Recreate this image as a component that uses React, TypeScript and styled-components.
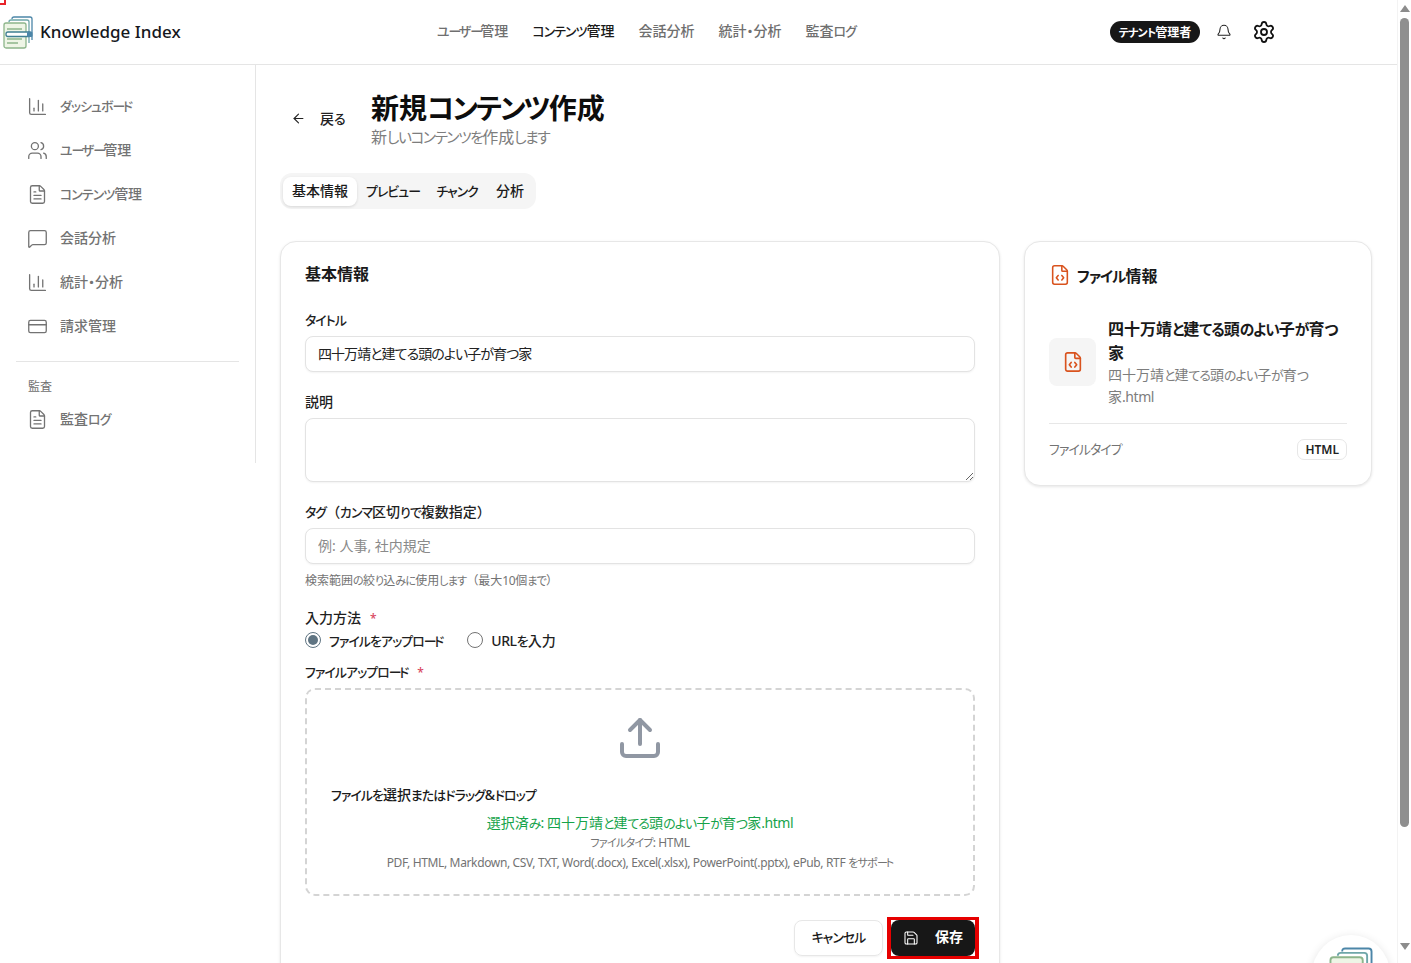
import React from "react";
import styled, { createGlobalStyle } from "styled-components";
import { ArrowLeft, Bell, ChartColumn, CreditCard, FileCode, FileText, MessageSquare, Save, Settings, Upload, Users } from "lucide-react";

const Global = createGlobalStyle`
  html, body { margin: 0; padding: 0; height: 100%; overflow: hidden; background: #fff; }
  body { font-family: "Noto Sans", "Noto Sans CJK JP", sans-serif; color: #111; font-feature-settings: "palt" 1; }
  * { box-sizing: border-box; }
`;

/* The reference's Japanese face has smaller, tighter kana than Noto: runs are adjusted by kind. */
const Kana = styled.span`font-size: var(--kana-size, 0.92em); letter-spacing: var(--kana, -0.07em);`;
const Long = styled.span`font-size: var(--kana-size, 0.92em); letter-spacing: var(--long, -0.2em);`;
const Latin = styled.span`letter-spacing: -0.03em;`;
const Wide = styled.span`font-feature-settings: normal; letter-spacing: -0.02em;`;
const Jp = ({ children }: { children: string }) => (
  <>
    {children.split(/([ぁ-んァ-ヶ]+|ー+|[（）]|[A-Za-z0-9.,:()& ]+)/).filter(Boolean).map((run, i) => {
      if (/^ー/.test(run)) return <Long key={i}>{run}</Long>;
      if (/^[ぁ-んァ-ヶ]/.test(run)) return <Kana key={i}>{run}</Kana>;
      if (/^[（）]/.test(run)) return <Wide key={i}>{run}</Wide>;
      if (/^[A-Za-z0-9.,:()& ]/.test(run)) return <Latin key={i}>{run}</Latin>;
      return <span key={i}>{run}</span>;
    })}
  </>
);

const Shell = styled.div`position: relative; display: flex; width: 1411px; height: 963px; overflow: hidden; background: #fff;`;
const Page = styled.div`flex: 0 0 1397px; width: 1397px; display: flex; flex-direction: column; height: 963px; overflow: hidden;`;
const ScrollTrack = styled.div`flex: 0 0 14px; background: #fff; border-left: 1px solid #f3f3f3; display: flex; flex-direction: column; align-items: center; padding-top: 5px;`;
const ScrollUp = styled.div`width: 0; height: 0; border-left: 5px solid transparent; border-right: 5px solid transparent; border-bottom: 7px solid #8c8c8c;`;
const ScrollDown = styled.div`width: 0; height: 0; border-left: 5px solid transparent; border-right: 5px solid transparent; border-top: 7px solid #8c8c8c; margin-top: 116px;`;
const ScrollThumb = styled.div`width: 9px; height: 809px; margin-top: 6px; border-radius: 5px; background: #8f8f8f;`;
const Marker = styled.div`position: absolute; left: 0; top: 0; width: 6px; height: 5px; border-right: 2px solid #e8232a; border-bottom: 2px solid #e8232a;`;

const Header = styled.header`flex: 0 0 65px; height: 65px; border-bottom: 1px solid #e5e5e5; display: grid; grid-template-columns: 437px 673px 1fr; align-items: center; padding-left: 3px;`;
const Brand = styled.div`display: flex; align-items: center; gap: 7px;`;
const BrandName = styled.span`font-size: 17px; font-weight: 500; color: #16181d; margin-top: -1px;`;
const TopNav = styled.nav`display: flex; gap: 24px; margin: -2px 0 0 -3px;`;
const TopLink = styled.span<{ $active?: boolean }>`font-size: 14px; font-weight: 500; line-height: 20px; color: ${p => (p.$active ? "#1a1a1a" : "#6f6f6f")};`;
const HeadRight = styled.div`display: flex; align-items: center; margin-left: -3px;`;
const Badge = styled.span`display: inline-flex; align-items: center; justify-content: center; width: 90px; height: 22px; border-radius: 11px; background: #171717; color: #fff; font-size: 12px; font-weight: 600;`;
const BellWrap = styled.span`display: flex; margin-left: 16px; color: #222;`;
const GearWrap = styled.span`display: flex; margin-left: 20px; color: #111;`;

const Body = styled.div`display: flex; flex: 1; min-height: 0; align-items: flex-start;`;
const Sidebar = styled.aside`flex: 0 0 256px; width: 256px; height: 398px; border-right: 1px solid #e5e5e5; padding: 19px 16px 0;`;
const SideItem = styled.div`display: flex; align-items: center; height: 44px; padding-left: 11px; gap: 12px; color: #737373;`;
const SideText = styled.span`font-size: 14px; font-weight: 500; color: #737373; margin-top: -2px;`;
const SideDivider = styled.div`height: 1px; background: #e5e5e5; margin: 13px 0 16px;`;
const SideLabel = styled.div`font-size: 12px; line-height: 18px; padding-left: 12px; color: #6f6f6f;`;
const SideLast = styled(SideItem)`height: 34px; margin-top: 6px;`;

const Main = styled.main`flex: 1; padding: 23px 25px 0 24px; min-width: 0;`;
const TitleRow = styled.div`display: flex; align-items: center; height: 60px;`;
const BackBtn = styled.div`display: flex; align-items: center; gap: 15px; padding-left: 11px; width: 91px; font-size: 14px; font-weight: 500; color: #222;`;
const BackLabel = styled.span`margin-left: -1px;`;
const TitleBlock = styled.div`display: flex; flex-direction: column;`;
const Title = styled.h1`--kana-size: 1em; --kana: -0.07em; --long: -0.07em; margin: 0; font-size: 28px; line-height: 36px; font-weight: 700; color: #0d0d0d;`;
const Subtitle = styled.p`--kana: -0.1em; margin: 1px 0 0; font-size: 16px; line-height: 20px; color: #7d7d7d;`;

const Tabs = styled.div`display: inline-flex; align-items: center; height: 36px; margin: 25px 0 32px; padding: 0 3px; border-radius: 12px; background: #f5f5f5;`;
const Tab = styled.div<{ $active?: boolean }>`
  height: 29px; display: flex; align-items: center; padding: 0 9px 2px; font-size: 14px; font-weight: 500; border-radius: 8px; color: #1a1a1a;
  ${p => (p.$active ? "background:#fff; box-shadow:0 1px 3px rgba(0,0,0,.12);" : "")}
`;
const Columns = styled.div`display: flex; align-items: flex-start; gap: 24px;`;
const Card = styled.section`background: #fff; border: 1px solid #e7e7e7; border-radius: 16px; box-shadow: 0 1px 3px rgba(0,0,0,.1);`;
const FormCard = styled(Card)`flex: 0 0 720px; padding: 21px 24px 0; height: 800px;`;
const InfoCard = styled(Card)`flex: 0 0 348px; height: 245px; padding: 21px 24px 0;`;
const CardTitle = styled.h2`margin: 0 0 25px; font-size: 16px; line-height: 22px; font-weight: 600; color: #1a1a1a;`;
const Label = styled.label`display: block; font-size: 14px; font-weight: 500; line-height: 20px; color: #1f1f1f;`;
const Required = styled.span`color: #d9475f; margin-left: 9px; font-size: 12px;`;
const Field = styled.input`
  display: block; width: 100%; height: 36px; margin-top: 6px; padding: 0 12px 2px; border: 1px solid #e3e3e3; border-radius: 8px;
  font: 400 14px "Noto Sans", "Noto Sans CJK JP", sans-serif; font-feature-settings: "palt" 1; letter-spacing: -0.95px; color: #222;
  background: #fff; box-shadow: 0 1px 2px rgba(0,0,0,.05); outline: none;
  &::placeholder { color: #8a8a8a; font-feature-settings: normal; letter-spacing: 0; }
`;
const Area = styled.textarea`display: block; width: 100%; height: 64px; margin-top: 6px; border: 1px solid #e3e3e3; border-radius: 8px; background: #fff; box-shadow: 0 1px 2px rgba(0,0,0,.05); outline: none;`;
const Spaced = styled.div<{ $top: number }>`margin-top: ${p => p.$top}px;`;
const Hint = styled.p`margin: 8px 0 0; font-size: 12px; line-height: 17px; color: #737373;`;
const RadioRow = styled.div`display: flex; align-items: center; height: 20px; margin-top: 1px;`;
const RadioDot = styled.span<{ $on?: boolean }>`width: 16px; height: 16px; border-radius: 50%; border: 1px solid ${p => (p.$on ? "#5f7482" : "#737373")}; display: flex; align-items: center; justify-content: center; &::after { content: ""; width: 10px; height: 10px; border-radius: 50%; background: ${p => (p.$on ? "#5f7482" : "transparent")}; }`;
const RadioText = styled.span`margin: 0 24px 0 8px; font-size: 14px; font-weight: 500; color: #1f1f1f;`;
const Drop = styled.div`height: 208px; margin-top: 5px; border: 2px dashed #d4d4d4; border-radius: 10px; display: flex; flex-direction: column; align-items: center; padding-top: 24px;`;
const UploadIcon = styled.div`height: 54px; color: #9097a3; display: flex;`;
const DropMain = styled.div`align-self: flex-start; margin: 17px 0 0 24px; font-size: 14px; font-weight: 500; line-height: 20px; color: #1a1a1a;`;
const Selected = styled.div`margin-top: 8px; font-size: 14px; line-height: 20px; color: #16a34a;`;
const Small = styled.div`font-size: 12px; line-height: 20px; color: #737373;`;
const Actions = styled.div`display: flex; justify-content: flex-end; align-items: center; gap: 8px; margin-top: 24px;`;
const CancelBtn = styled.div`width: 89px; height: 36px; padding-bottom: 4px; display: flex; align-items: center; justify-content: center; border: 1px solid #e7e7e7; border-radius: 8px; font-size: 14px; font-weight: 500; box-shadow: 0 1px 2px rgba(0,0,0,.05); color: #1a1a1a;`;
const SaveFrame = styled.div`margin: -3px -4px; border-style: solid; border-color: #e60000; border-width: 3px 4px; display: flex;`;
const SaveBtn = styled.div`width: 84px; height: 36px; padding: 0 0 0 12px; display: flex; align-items: center; gap: 16px; background: #171717; color: #fff; border-radius: 8px; font-size: 14px; font-weight: 600;`;
const SaveLabel = styled.span`margin-top: -4px;`;

const InfoHead = styled.div`display: flex; align-items: center; gap: 6px; height: 24px; font-size: 16px; font-weight: 600; color: #1a1a1a;`;
const FileRow = styled.div`display: flex; align-items: center; gap: 12px; margin-top: 30px;`;
const FileBox = styled.div`flex: 0 0 47px; height: 48px; border-radius: 8px; background: #f5f5f5; color: #d9531e; display: flex; align-items: center; justify-content: center;`;
const FileText2 = styled.div`min-width: 0;`;
const FileName = styled.div`font-size: 16px; line-height: 24px; font-weight: 600; color: #1a1a1a;`;
const FileSub = styled.div`margin-top: -1px; font-size: 14px; line-height: 21px; color: #7d7d7d;`;
const Rule = styled.div`height: 1px; background: #e7e7e7; margin-top: 16px;`;
const TypeRow = styled.div`display: flex; align-items: center; justify-content: space-between; margin-top: 14px; height: 22px;`;
const TypeLabel = styled.span`font-size: 14px; color: #737373; margin-top: -2px;`;
const TypeBadge = styled.span`height: 21px; padding: 0 7px; display: flex; align-items: center; border: 1px solid #e7e7e7; border-radius: 7px; font-size: 12px; font-weight: 600; color: #222;`;

const Floater = styled.div`position: absolute; left: 1312px; top: 935px; width: 78px; height: 78px; border-radius: 50%; background: #fff; box-shadow: 0 2px 10px rgba(0,0,0,.12); display: flex; justify-content: center; padding-top: 12px;`;

const Logo = ({ size = 30 }: { size?: number }) => (
  <svg width={size} height={size * 1.1} viewBox="0 0 30 33" fill="none" strokeWidth="1.3">
    <path d="M9 3 Q9 1 11 1 H27 Q29 1 29 3 V24" stroke="#4c86a8" />
    <path d="M6 6 Q6 4 8 4 H24 Q26 4 26 6 V27" stroke="#6fa6a8" />
    <rect x="1" y="7" width="22" height="25" rx="2" fill="#eef5e6" stroke="#8db58b" />
    <path d="M4 13 H19 M4 23 H19 M4 27 H15" stroke="#8db58b" />
    <rect x="3" y="16" width="25" height="4.5" rx="2" fill="#fff" stroke="#3f7f93" />
    <rect x="24" y="15.5" width="5.5" height="5.5" rx="1.5" fill="#4c86a8" />
  </svg>
);

const SideIcon = { size: 21, strokeWidth: 1.5 };
const menu = [
  { t: "ダッシュボード", I: ChartColumn },
  { t: "ユーザー管理", I: Users },
  { t: "コンテンツ管理", I: FileText },
  { t: "会話分析", I: MessageSquare },
  { t: "統計・分析", I: ChartColumn },
  { t: "請求管理", I: CreditCard },
];
const top = ["ユーザー管理", "コンテンツ管理", "会話分析", "統計・分析", "監査ログ"];

export default function App() {
  return (
    <Shell>
      <Global />
      <Marker />
      <Page>
        <Header>
          <Brand><Logo /><BrandName>Knowledge Index</BrandName></Brand>
          <TopNav>{top.map((t, i) => <TopLink key={t} $active={i === 1}><Jp>{t}</Jp></TopLink>)}</TopNav>
          <HeadRight>
            <Badge><Jp>テナント管理者</Jp></Badge>
            <BellWrap><Bell size={16} strokeWidth={1.6} /></BellWrap>
            <GearWrap><Settings size={24} strokeWidth={1.8} /></GearWrap>
          </HeadRight>
        </Header>
        <Body>
          <Sidebar>
            {menu.map(({ t, I }) => <SideItem key={t}><I {...SideIcon} /><SideText><Jp>{t}</Jp></SideText></SideItem>)}
            <SideDivider />
            <SideLabel>監査</SideLabel>
            <SideLast><FileText {...SideIcon} /><SideText><Jp>監査ログ</Jp></SideText></SideLast>
          </Sidebar>
          <Main>
            <TitleRow>
              <BackBtn><ArrowLeft size={15} strokeWidth={1.8} /><BackLabel><Jp>戻る</Jp></BackLabel></BackBtn>
              <TitleBlock>
                <Title><Jp>新規コンテンツ作成</Jp></Title>
                <Subtitle><Jp>新しいコンテンツを作成します</Jp></Subtitle>
              </TitleBlock>
            </TitleRow>
            <Tabs>
              <Tab $active>基本情報</Tab><Tab><span><Jp>プレビュー</Jp></span></Tab><Tab><span><Jp>チャンク</Jp></span></Tab><Tab>分析</Tab>
            </Tabs>
            <Columns>
              <FormCard>
                <CardTitle>基本情報</CardTitle>
                <Label><Jp>タイトル</Jp></Label>
                <Field readOnly value="四十万靖と建てる頭のよい子が育つ家" />
                <Spaced $top={20}><Label>説明</Label><Area readOnly /></Spaced>
                <Spaced $top={20}><Label><Jp>タグ（カンマ区切りで複数指定）</Jp></Label><Field readOnly placeholder="例: 人事, 社内規定" /></Spaced>
                <Hint><Jp>検索範囲の絞り込みに使用します（最大10個まで）</Jp></Hint>
                <Spaced $top={19}><Label>入力方法<Required>*</Required></Label></Spaced>
                <RadioRow>
                  <RadioDot $on /><RadioText><Jp>ファイルをアップロード</Jp></RadioText>
                  <RadioDot /><RadioText><Jp>URLを入力</Jp></RadioText>
                </RadioRow>
                <Spaced $top={12}><Label><Jp>ファイルアップロード</Jp><Required>*</Required></Label></Spaced>
                <Drop>
                  <UploadIcon><Upload size={48} strokeWidth={2} /></UploadIcon>
                  <DropMain><Jp>ファイルを選択またはドラッグ&ドロップ</Jp></DropMain>
                  <Selected><Jp>選択済み: 四十万靖と建てる頭のよい子が育つ家.html</Jp></Selected>
                  <Small><Jp>ファイルタイプ: HTML</Jp></Small>
                  <Small><Jp>PDF, HTML, Markdown, CSV, TXT, Word(.docx), Excel(.xlsx), PowerPoint(.pptx), ePub, RTF をサポート</Jp></Small>
                </Drop>
                <Actions>
                  <CancelBtn><span><Jp>キャンセル</Jp></span></CancelBtn>
                  <SaveFrame><SaveBtn><Save size={16} strokeWidth={1.6} /><SaveLabel>保存</SaveLabel></SaveBtn></SaveFrame>
                </Actions>
              </FormCard>
              <InfoCard>
                <InfoHead><FileCode size={22} color="#d9531e" strokeWidth={1.7} /><span><Jp>ファイル情報</Jp></span></InfoHead>
                <FileRow>
                  <FileBox><FileCode size={22} strokeWidth={1.8} /></FileBox>
                  <FileText2>
                    <FileName><Jp>四十万靖と建てる頭のよい子が育つ家</Jp></FileName>
                    <FileSub><Jp>四十万靖と建てる頭のよい子が育つ家.html</Jp></FileSub>
                  </FileText2>
                </FileRow>
                <Rule />
                <TypeRow><TypeLabel><Jp>ファイルタイプ</Jp></TypeLabel><TypeBadge>HTML</TypeBadge></TypeRow>
              </InfoCard>
            </Columns>
          </Main>
        </Body>
      </Page>
      <ScrollTrack><ScrollUp /><ScrollThumb /><ScrollDown /></ScrollTrack>
      <Floater><Logo size={44} /></Floater>
    </Shell>
  );
}
